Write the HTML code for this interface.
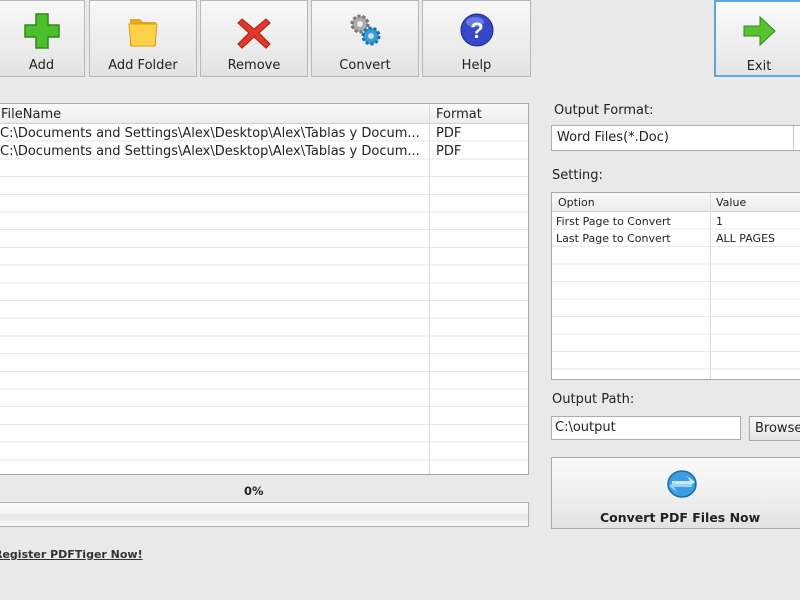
<!DOCTYPE html>
<html><head><style>
*{margin:0;padding:0;box-sizing:border-box}
body{width:800px;height:600px;background:#e9e9e9;font-family:"DejaVu Sans","Liberation Sans",sans-serif;font-size:13px;color:#222;position:relative;overflow:hidden}
.a{position:absolute}
.tb{position:absolute;top:0;height:77px;border:1px solid #b8b8b8;background:linear-gradient(#f8f8f8,#ececec 60%,#e2e2e2);text-align:center;font-size:13px;color:#222}
.tb span{position:absolute;left:0;right:0;top:57px}
.tb svg{position:absolute;left:50%;top:10px;margin-left:-19px}
.grid{background-color:#fff;border:1px solid #a8a8a8}
.hdr{position:absolute;left:0;right:0;top:0;background:linear-gradient(#fafafa,#ececec);border-bottom:1px solid #d0d0d0}
.f{font-size:13px}
</style></head><body>

<div class="tb" style="left:-2px;width:87px"><svg width="38" height="40" viewBox="0 0 38 40"><path d="M13 3h12v11h11v12H25v11H13V26H2V14h11z" fill="#4cbf2c" stroke="#2e8a1c" stroke-width="1.5"/></svg><span>Add</span></div>
<div class="tb" style="left:89px;width:108px"><svg width="38" height="40" viewBox="0 0 38 40"><path d="M6 8h10l3 3h13v24H6z" fill="#e8a81c"/><path d="M5 13h28l-2 22H7z" fill="#ffd24a" stroke="#d99a10"/></svg><span>Add Folder</span></div>
<div class="tb" style="left:200px;width:108px"><svg width="38" height="40" viewBox="0 0 38 40"><path d="M7 8l12 10 12-10 4 4-11 10 11 11-4 4-12-11-12 11-4-4 11-11L3 12z" fill="#e0392a" stroke="#a81c10"/></svg><span>Remove</span></div>
<div class="tb" style="left:311px;width:108px"><svg width="38" height="40" viewBox="0 0 38 40"><circle cx="14" cy="13" r="8" fill="#aaa" stroke="#777" stroke-width="3" stroke-dasharray="3 2"/><circle cx="14" cy="13" r="3" fill="#eee"/><circle cx="25" cy="25" r="8" fill="#3a9ad8" stroke="#1f6fae" stroke-width="3" stroke-dasharray="3 2"/><circle cx="25" cy="25" r="3" fill="#cde"/></svg><span>Convert</span></div>
<div class="tb" style="left:422px;width:109px"><svg width="38" height="40" viewBox="0 0 38 40"><circle cx="19" cy="19" r="16" fill="#3548c8" stroke="#1c2a90"/><ellipse cx="17" cy="11" rx="9" ry="5" fill="#8fa0f0" opacity=".6"/><text x="19" y="27" font-size="22" font-weight="bold" fill="#fff" text-anchor="middle" font-family="Liberation Sans">?</text></svg><span>Help</span></div>
<div class="tb" style="left:714px;width:90px;border:2px solid #5aa6e0;background:linear-gradient(#fbfbfb,#eeeeee 60%,#e4e4e4)"><svg width="38" height="40" viewBox="0 0 38 40"><path d="M4 14h16V5l15 14-15 14v-9H4z" fill="#58c232" stroke="#2f8a18"/></svg><span>Exit</span></div>

<div class="a grid" style="left:-1px;top:103px;width:530px;height:372px;background-image:repeating-linear-gradient(#fff 0,#fff 16.7px,#e6e6e6 16.7px,#e6e6e6 17.7px);background-position:0 20px">
 <div class="hdr" style="height:20px"></div>
 <div class="a" style="left:429px;top:0;bottom:0;width:1px;background:#dcdcdc"></div>
 <div class="a f" style="left:1px;top:3px">FileName</div>
 <div class="a f" style="left:436px;top:3px">Format</div>
 <div class="a f" style="left:0;top:22px">C:\Documents and Settings\Alex\Desktop\Alex\Tablas y Docum...</div>
 <div class="a f" style="left:436px;top:22px">PDF</div>
 <div class="a f" style="left:0;top:40px">C:\Documents and Settings\Alex\Desktop\Alex\Tablas y Docum...</div>
 <div class="a f" style="left:436px;top:40px">PDF</div>
</div>

<div class="a" style="left:244px;top:484px;font-size:11.5px;font-weight:bold">0%</div>
<div class="a" style="left:-1px;top:502px;width:530px;height:25px;border:1px solid #b0b0b0;background:linear-gradient(#fcfcfc,#f6f6f6 45%,#e6e6e6 50%,#f8f8f8)"></div>
<div class="a" style="left:-6px;top:548px;font-size:11px;font-weight:bold;color:#333;text-decoration:underline">Register PDFTiger Now!</div>

<div class="a" style="left:554px;top:103px;font-size:13px">Output Format:</div>
<div class="a" style="left:551px;top:125px;width:260px;height:26px;border:1px solid #adadad;background:#fff;padding:4px 5px;font-size:13px">Word Files(*.Doc)<div class="a" style="left:241px;top:0;bottom:0;width:1px;background:#ccc"></div></div>
<div class="a" style="left:552px;top:168px;font-size:13px">Setting:</div>
<div class="a grid" style="left:551px;top:192px;width:260px;height:188px;background-image:repeating-linear-gradient(#fff 0,#fff 16.5px,#e8e8e8 16.5px,#e8e8e8 17.5px);background-position:0 19px">
 <div class="hdr" style="height:19px"></div>
 <div class="a" style="left:158px;top:0;bottom:0;width:1px;background:#dcdcdc"></div>
 <div class="a" style="left:6px;top:3px;font-size:11px">Option</div>
 <div class="a" style="left:164px;top:3px;font-size:11px">Value</div>
 <div class="a" style="left:4px;top:22px;font-size:11px">First Page to Convert</div>
 <div class="a" style="left:164px;top:22px;font-size:11px">1</div>
 <div class="a" style="left:4px;top:39px;font-size:11px">Last Page to Convert</div>
 <div class="a" style="left:164px;top:39px;font-size:11px">ALL PAGES</div>
</div>
<div class="a" style="left:552px;top:392px;font-size:13px">Output Path:</div>
<div class="a" style="left:551px;top:416px;width:190px;height:24px;border:1px solid #adadad;background:#fff;padding:3px 3px;font-size:13px">C:\output</div>
<div class="a" style="left:749px;top:416px;width:70px;height:25px;border:1px solid #a8a8a8;background:linear-gradient(#fafafa,#e4e4e4);padding:4px 5px;font-size:13px">Browse</div>
<div class="a" style="left:551px;top:457px;width:260px;height:72px;border:1px solid #a8a8a8;background:linear-gradient(#fafafa,#eeeeee 60%,#e2e2e2)">
 <svg class="a" style="left:112px;top:8px" width="36" height="36" viewBox="0 0 36 36"><ellipse cx="18" cy="18" rx="14" ry="13" fill="#3a9fe0" stroke="#1a6cb0" stroke-width="1.5"/><path d="M8 15h18l-3-5 8 6-8 6 3-4H8z" fill="#cfeaff"/><path d="M28 21H10l3 5-8-6 8-6-3 4h18z" fill="#9fd2f8"/></svg>
 <div class="a" style="left:48px;top:52px;font-size:12.5px;font-weight:bold;color:#222">Convert PDF Files Now</div>
</div>
</body></html>
